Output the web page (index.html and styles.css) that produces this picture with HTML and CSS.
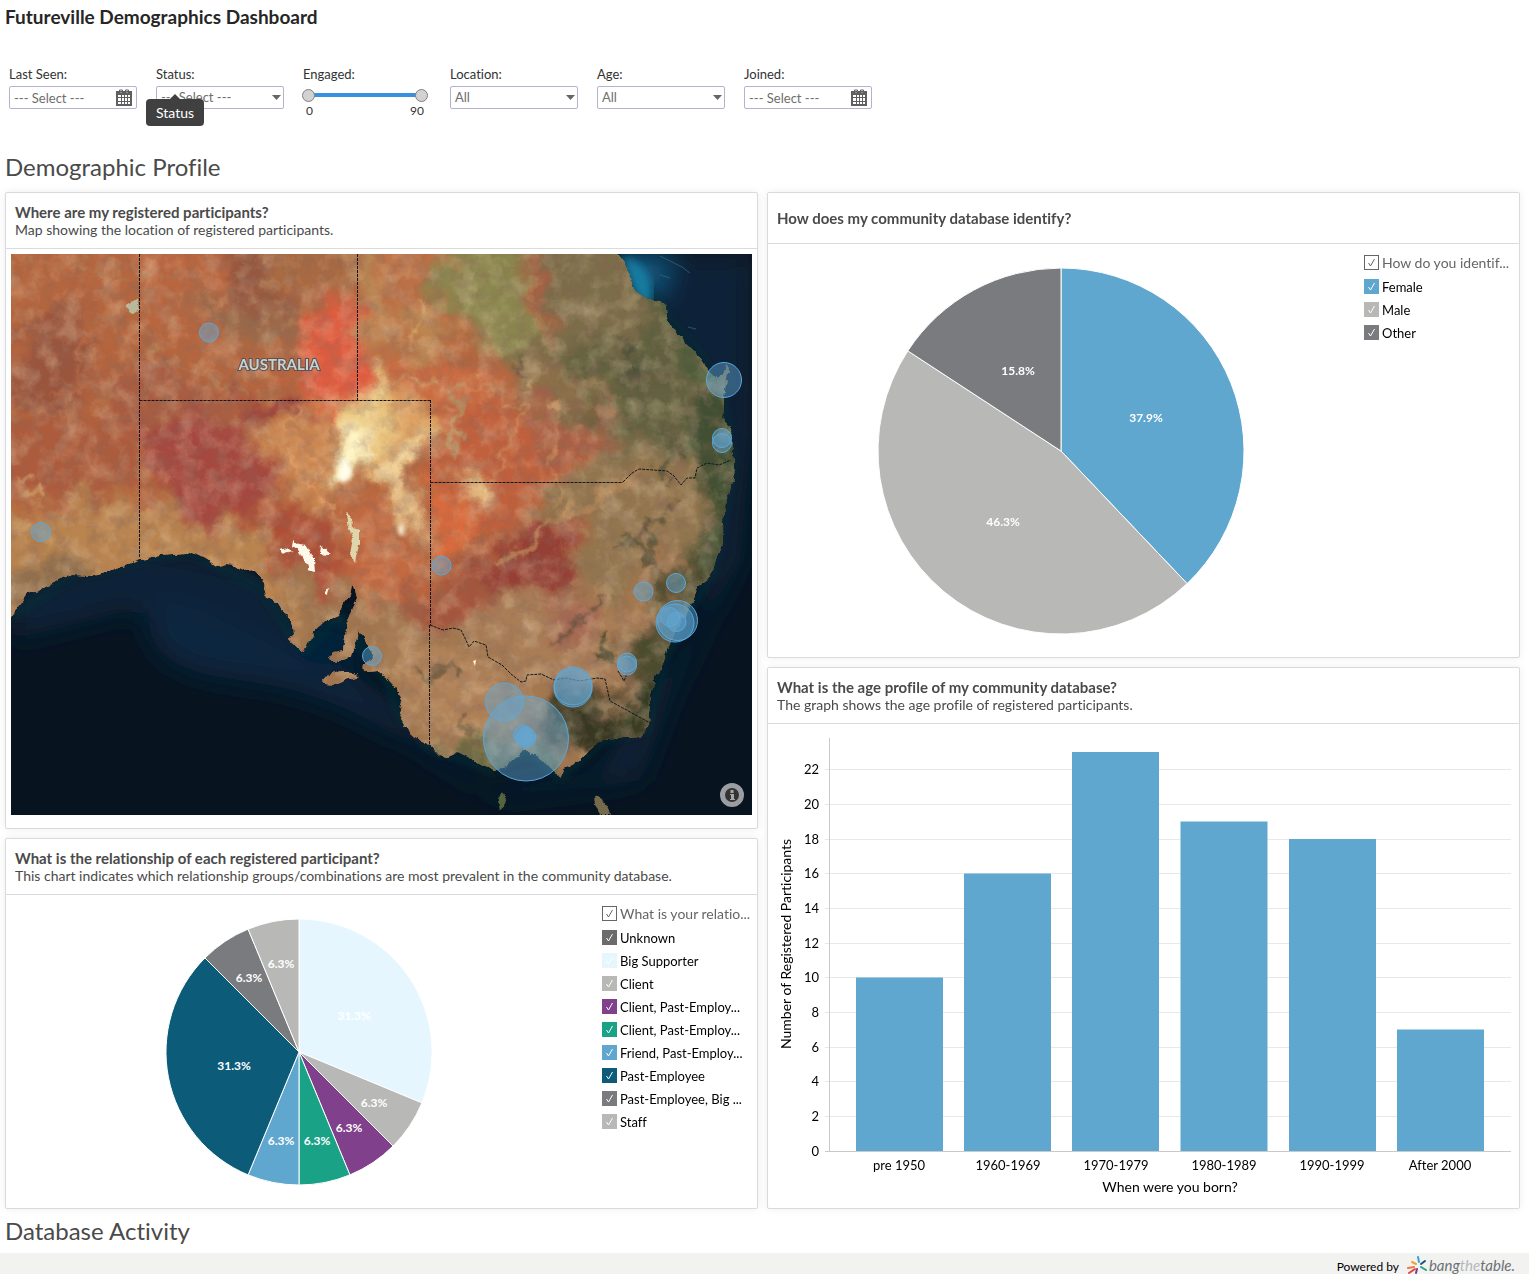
FILE: index.html
```html
<!DOCTYPE html>
<html lang="en">
<head>
<meta charset="utf-8">
<title>Futureville Demographics Dashboard</title>
<meta name="viewport" content="width=device-width, initial-scale=1">
<link rel="stylesheet" href="styles.css">
</head>
<body>
<main class="dashboard">
  <h1 class="dashboard-title">Futureville Demographics Dashboard</h1>

  <form class="filters">
    <div class="filter">
      <label for="last-seen">Last Seen:</label>
      <div class="field">
        <input id="last-seen" type="text" value="--- Select ---">
        <button type="button" class="calendar" aria-label="Pick last seen dates">
          <svg viewBox="0 0 16 17" width="16" height="17"><path fill="#5f5f5f" fill-rule="evenodd" d="M0 2h16v15H0zM2 6h3v2H2zM6 6h2v2H6zM9 6h2v2H9zM12 6h2v2h-2zM2 9h3v3H2zM6 9h2v3H6zM9 9h2v3H9zM12 9h2v3h-2zM2 13h3v2H2zM6 13h2v2H6zM9 13h2v2H9zM12 13h2v2h-2z"/><path d="M3.500 4V1h3v3M9.500 4V1h3v3" fill="none" stroke="#5f5f5f"/><path d="M4.500 3.500h1M10.500 3.500h1" stroke="#ccc"/></svg>
        </button>
      </div>
    </div>
    <div class="filter filter-status">
      <label for="status">Status:</label>
      <select id="status"><option>--- Select ---</option></select>
      <div class="tooltip" role="tooltip">Status</div>
    </div>
    <div class="filter">
      <label for="engaged-min">Engaged:</label>
      <div class="slider">
        <input id="engaged-min" type="range" min="0" max="90" value="0">
        <input id="engaged-max" type="range" min="0" max="90" value="90" aria-label="Engaged maximum">
      </div>
      <div class="slider-values"><span>0</span><span>90</span></div>
    </div>
    <div class="filter">
      <label for="location">Location:</label>
      <select id="location"><option>All</option></select>
    </div>
    <div class="filter">
      <label for="age">Age:</label>
      <select id="age"><option>All</option></select>
    </div>
    <div class="filter">
      <label for="joined">Joined:</label>
      <div class="field">
        <input id="joined" type="text" value="--- Select ---">
        <button type="button" class="calendar" aria-label="Pick joined dates">
          <svg viewBox="0 0 16 17" width="16" height="17"><path fill="#5f5f5f" fill-rule="evenodd" d="M0 2h16v15H0zM2 6h3v2H2zM6 6h2v2H6zM9 6h2v2H9zM12 6h2v2h-2zM2 9h3v3H2zM6 9h2v3H6zM9 9h2v3H9zM12 9h2v3h-2zM2 13h3v2H2zM6 13h2v2H6zM9 13h2v2H9zM12 13h2v2h-2z"/><path d="M3.500 4V1h3v3M9.500 4V1h3v3" fill="none" stroke="#5f5f5f"/><path d="M4.500 3.500h1M10.500 3.500h1" stroke="#ccc"/></svg>
        </button>
      </div>
    </div>
  </form>

  <h2 class="section-title">Demographic Profile</h2>

  <div class="cards">
    <div class="column">
      <section class="card">
        <header class="card-head">
          <h3>Where are my registered participants?</h3>
          <p>Map showing the location of registered participants.</p>
        </header>
        <div class="map">
          <svg viewBox="11 254 741 561" role="img" aria-label="Map of south-east Australia">
            <defs>
              <clipPath id="land"><path d="M-10 230H610L617 254 626 266 631 279 634 291 643 297 655 301 665 304 668 320 678 335 690 347 700 357 707 368 718 380 724 370 727 362 728 372 724 396 723 420 731 428 732 446 735 462 734 478 729 495 724 512 722 530 723 542 717 556 712 573 703 583 697 588 692 604 683 618 675 632 668 646 663 661 656 677 651 694 649 712 648 728 640 737 625 738 603 740 592 748 578 761 562 769 560 779 556 773 547 764 535 755 526 749 518 756 505 767 493 770 480 764 468 757 458 752 447 757 439 755 431 746 420 741 409 731 399 713 402 703 397 690 388 679 378 671 366 672 361 668 368 662 374 655 369 647 363 638 359 629 356 642 352 655 345 659 335 662 329 659 333 652 343 650 345 636 347 622 352 608 357 598 355 590 352 583 350 596 343 604 338 616 326 621 315 631 308 642 303 652 296 647 289 640 293 634 291 620 284 614 278 604 267 598 264 588 265 580 255 571 245 572 236 566 226 565 218 567 205 558 191 551 186 554 160 556 139 559 125 566 107 573 93 576 72 575 60 579 40 590 27 594 21 603 11 617L-10 630z"/><path d="M322 681L328 674 342 671 350 672 360 676 352 679 344 681 337 685 325 684z"/></clipPath>
              <filter id="warp" x="-5%" y="-5%" width="110%" height="110%"><feTurbulence type="fractalNoise" baseFrequency=".022" numOctaves="6" seed="8" result="n"/><feGaussianBlur in="SourceGraphic" stdDeviation="7" result="b"/><feDisplacementMap in="b" in2="n" scale="60" xChannelSelector="R" yChannelSelector="G"/></filter>
              <filter id="detail" x="-5%" y="-5%" width="110%" height="110%"><feTurbulence type="fractalNoise" baseFrequency=".05" numOctaves="5" seed="21" result="n"/><feDisplacementMap in="SourceGraphic" in2="n" scale="34" xChannelSelector="R" yChannelSelector="G" result="d"/><feGaussianBlur in="d" stdDeviation="1"/></filter>
              <filter id="rough" x="-5%" y="-5%" width="110%" height="110%"><feTurbulence type="fractalNoise" baseFrequency=".12" numOctaves="3" seed="4" result="n"/><feDisplacementMap in="SourceGraphic" in2="n" scale="6" xChannelSelector="R" yChannelSelector="G"/></filter>
              <filter id="lightgrain" x="0" y="0" width="100%" height="100%"><feTurbulence type="fractalNoise" baseFrequency=".05" numOctaves="7" seed="13"/><feColorMatrix values="0 0 0 0 .88  0 0 0 0 .7  0 0 0 0 .46  1.800 0 0 0 -.75"/></filter>
              <filter id="darkgrain" x="0" y="0" width="100%" height="100%"><feTurbulence type="fractalNoise" baseFrequency=".07" numOctaves="7" seed="31"/><feColorMatrix values="0 0 0 0 .24  0 0 0 0 .13  0 0 0 0 .1  0 2 0 0 -.85"/></filter>
              <filter id="soft" x="-30%" y="-30%" width="160%" height="160%"><feGaussianBlur stdDeviation="14"/></filter>
              <filter id="shore" x="-5%" y="-5%" width="110%" height="110%"><feGaussianBlur stdDeviation="4"/></filter>
              <filter id="glow" x="-50%" y="-50%" width="200%" height="200%"><feGaussianBlur stdDeviation="2"/></filter>
            </defs>
            <rect x="11" y="254" width="741" height="561" fill="#07141f"/>
            <g filter="url(#soft)">
              <path d="M11 590L140 545 260 570 320 650 420 720 500 800 640 780 670 700 740 560 752 430V254H600L720 400 700 620 600 770 480 790 410 740 350 700 250 640 130 610 11 640z" fill="#0b2038"/>
              <path d="M60 612Q160 590 210 615T320 670 400 740Q330 690 240 680T150 625 40 630z" fill="#102740"/>
              <path d="M610 254L670 254 655 300z" fill="#13618c"/>
              <ellipse cx="330" cy="640" rx="40" ry="25" fill="#06243a"/>
            </g>
            <path d="M617 254L634 290 655 301 668 320 700 357 722 400 733 460 724 512 712 573 683 618 663 661 648 728 600 740 560 777 526 749 493 770 431 746 399 713 388 679 357 640 338 616 303 652 264 590 191 551 139 559 72 575 11 617" fill="none" stroke="#0d3038" stroke-width="5" filter="url(#shore)"/>
            <path d="M622 256Q650 262 652 290T634 292z" fill="#147ba0" filter="url(#shore)"/>
            <path d="M660 256l10 5 12 6 8 6M660 275l10 3M688 327l8 2" fill="none" stroke="#356b7d" opacity=".7"/>
            <g filter="url(#rough)">
            <path d="M498 800l4-8 4 5-1 10-5 4z" fill="#54653f"/>
            <path d="M594 795l8 4 6 9 2 7h-9l-6-9z" fill="#746b4c"/>
            <g clip-path="url(#land)">
              <rect x="-20" y="220" width="800" height="620" fill="#b4663f"/>
              <g filter="url(#warp)">
                <path d="M500 220H800V580L620 560 560 420 500 350z" fill="#7b6d48"/>
                <path d="M270 580L420 590 600 560 780 540V840H270z" fill="#a2774f"/>
                <path d="M-20 510L80 500 240 512 275 550 290 620-20 660z" fill="#b98450"/>
                <path d="M20 320L80 305 85 400 50 420 15 390z" fill="#9a543e"/>
                <path d="M90 370L150 360 260 420 230 450 120 440z" fill="#a75d42"/>
                <path d="M140 220L230 220 260 320 150 330z" fill="#b9663f"/>
                <path d="M225 220L280 220 290 310 240 330z" fill="#96593f"/>
                <path d="M170 295L240 300 300 320 285 345 220 345z" fill="#9b694a"/>
                <path d="M260 220L350 220 350 280 300 310 270 280z" fill="#a86a42"/>
                <path d="M345 220L420 220 415 300 385 370 365 330z" fill="#bb8a56"/>
                <path d="M300 330L325 305 365 315 378 390 355 430 310 415 285 370z" fill="#de5b40"/>
                <path d="M150 415L240 420 272 460 265 500 210 525 150 495z" fill="#a54a41"/>
                <path d="M-10 420H135V480L100 500-10 490z" fill="#ac5b3c"/>
                <path d="M240 400L300 410 290 428 250 420z" fill="#9a413e"/>
                <path d="M270 435L330 400 345 460 330 510 290 500 268 460z" fill="#cb8651"/>
                <path d="M-20 580L60 555 100 570 40 605-20 630z" fill="#92704d"/>
                <path d="M240 500L330 515 350 560 330 600 290 580z" fill="#ad4f39"/>
                <path d="M345 405L385 375 405 410 385 450 360 480 340 500 328 465z" fill="#edcd86"/>
                <path d="M342 430L362 420 368 450 350 490 333 480z" fill="#fff7c8"/>
                <path d="M385 400L430 395 425 440 410 470 416 540 390 500 375 470z" fill="#dca060"/>
                <path d="M405 425L422 430 410 470 414 535 402 530 396 490 380 475z" fill="#f2d59a"/>
                <path d="M350 500L395 510 420 600 350 590z" fill="#c46b43"/>
                <path d="M370 220L440 220 440 330 385 350z" fill="#bb7044"/>
                <path d="M395 300L450 300 450 350 405 370z" fill="#bd8450"/>
                <path d="M430 220L520 220 540 330 500 355 455 310z" fill="#8b8650"/>
                <path d="M530 220L545 270 550 340 543 340 534 300z" fill="#b45840"/>
                <path d="M550 355L660 330 710 380 720 470 680 460 590 410z" fill="#646240"/>
                <path d="M600 370L650 360 660 385 610 400z" fill="#50533a"/>
                <path d="M500 350L570 360 590 400 520 405z" fill="#8c704a"/>
                <path d="M395 365L500 375 500 420 430 440 430 400 390 400z" fill="#c96c42"/>
                <path d="M435 410L540 400 600 440 590 480 520 520 440 560z" fill="#c0603e"/>
                <path d="M510 400L600 415 610 445 540 480z" fill="#ab6044"/>
                <path d="M465 470L490 470 482 505 465 490z" fill="#f0cb88"/>
                <path d="M430 490L470 500 480 545 430 570z" fill="#d86a3e"/>
                <path d="M520 510L610 455 700 460 690 540 600 600 575 520z" fill="#937650"/>
                <path d="M495 545L560 515 590 570 560 605 500 595 470 570z" fill="#953f34"/>
                <path d="M400 590L480 570 495 615 420 620z" fill="#a6563e"/>
                <path d="M480 610L560 590 640 620 640 670 560 690 480 650z" fill="#a97d56"/>
                <path d="M535 605L580 600 600 640 560 640z" fill="#a66651"/>
                <path d="M420 635L520 690 500 740 460 750 400 700 380 630z" fill="#b08259"/>
                <path d="M700 390L780 380 780 480 750 580 690 610 700 500z" fill="#435031"/>
                <path d="M650 600L690 570 740 590 690 680 670 750 600 760 620 680z" fill="#4b4b2f"/>
                <path d="M545 700L610 685 650 735 590 760 535 725z" fill="#383921"/>
                <path d="M612 655L642 655 638 710 612 710z" fill="#806544"/>
                <path d="M440 745L560 745 570 800 430 790z" fill="#686740"/>
                <path d="M610 230L650 260 735 380 690 380 650 320z" fill="#4f5d3a"/>
              </g>
              <g filter="url(#detail)" fill="none" stroke-linecap="round" opacity=".75">
                <path d="M500 565L530 540 560 520 590 505 640 470" stroke="#b98d5c" stroke-width="8"/>
                <path d="M450 400L480 380 520 410 510 450 480 490M560 400L550 450 560 500" stroke="#cf9762" stroke-width="3"/>
                <path d="M460 390Q450 420 458 450" stroke="#b19a69" stroke-width="7"/>
                <path d="M410 350Q430 320 420 300M400 380L440 385M520 390L530 380" stroke="#d8ad6d" stroke-width="3"/>
                <path d="M140 350L200 372 250 395M80 260L120 280 180 270" stroke="#a98760" stroke-width="2"/>
                <path d="M20 480L30 470M25 500L40 495" stroke="#d1a06b" stroke-width="4"/>
                <path d="M85 330Q80 380 60 400" stroke="#c47046" stroke-width="3"/>
                <path d="M290 410L300 440 320 470 310 490M280 450L300 480 340 520" stroke="#e5a167" stroke-width="3"/>
                <path d="M625 340L635 355 620 375" stroke="#4b4c39" stroke-width="5"/>
                <path d="M670 430L672 460 665 480M655 520L650 560 625 535" stroke="#55513a" stroke-width="7"/>
                <path d="M420 675L460 670M460 715L465 735" stroke="#67563d" stroke-width="7"/>
                <path d="M525 380L519 360M610 590L560 640M680 500L640 540" stroke="#5d493c" stroke-width="3"/>
                <path d="M610 670L600 650 610 630M620 730L650 690" stroke="#2f3820" stroke-width="7"/>
              </g>
              <rect x="-10" y="240" width="780" height="590" filter="url(#lightgrain)" opacity=".4"/>
              <rect x="-10" y="240" width="780" height="590" filter="url(#darkgrain)" opacity=".4"/>
              <path d="M346 512l5 5 1 10 7 2 0 16-4 17-5-8 3-16-6-14z" fill="#ded5aa"/>
              <path d="M125 307l13-8 2 10-8 4z" fill="#b7bb9b"/>
            </g>
            <path d="M294 541l5 4 8 1 4 8 3 5 1 14-9-2 4-6-7-4-4-10-6-5zM322 545l5 7 4 1-6 4-4-3zM278 550l10-2 4 4-9 3zM325 593l5-6-2 8z" fill="#fff9ea"/>
            </g>
            <path d="M344 455l6 10 3 10-10 8-6-6zM398 526l5-2 1 11-5 0z" fill="#fffde8" filter="url(#glow)"/>
            <path d="M473 661l3-1-1 6zM498 308l-3-3M545 300l4-4" fill="#fff6dc"/>
            <path d="M139.500 254V558M139.500 400.500H430.500M357.500 254V400M430.500 400V625M430.500 482.500H623M429.500 625V745" class="border"/>
            <path d="M623 482l9-9 7-4 14 1 14 1 7 5 7 9 6-7 8 0 2-10 10-5 12 2 12-5M430 625l13 5 10-2 8 2 4 8 4 9 5-6 12 4 2 12 14 8 9 9 10 8 5-1 1-6 14-1 13 6 11-2 15 3 17-3 8 1 5 22 42 23M618 671l6 10 3-7M487 781H527M557 781H601" class="border"/>
            <text x="279" y="370" class="country">AUSTRALIA</text>
            <g class="bubbles">
              <circle cx="209" cy="332.500" r="9.500"/><circle cx="41" cy="532" r="9.500"/><circle cx="724" cy="380" r="17.500"/><circle cx="722" cy="438" r="9.500"/><circle cx="722" cy="443" r="9.500"/><circle cx="441.500" cy="565.500" r="9.500"/><circle cx="643.500" cy="591.500" r="9.500"/><circle cx="676" cy="583" r="9.500"/><circle cx="677.500" cy="620.500" r="20"/><circle cx="675" cy="623" r="19"/><circle cx="670" cy="617" r="9.500"/><circle cx="676.500" cy="622" r="9.500"/><circle cx="627" cy="662.500" r="9.500"/><circle cx="627" cy="665.500" r="9.500"/><circle cx="372" cy="656" r="9.500"/><circle cx="573" cy="686" r="19"/><circle cx="573" cy="688" r="19"/><circle cx="504.500" cy="702" r="19"/><circle cx="526" cy="738.500" r="42.500"/><circle cx="523" cy="735" r="9.500"/><circle cx="526" cy="737.500" r="10"/><circle cx="526" cy="737.500" r="8"/>
            </g>
            <circle cx="732" cy="795" r="9.500" fill="#333" stroke="#9a9da1" stroke-width="5"/>
            <path d="M730.500 790h3v3h-3zM730 794h4v5h1v1h-5v-1h1v-4h-1z" fill="#a5a7aa"/>
          </svg>
        </div>
      </section>

      <section class="card card-fill">
        <header class="card-head">
          <h3>What is the relationship of each registered participant?</h3>
          <p>This chart indicates which relationship groups/combinations are most prevalent in the community database.</p>
        </header>
        <div class="pie-layout">
          <svg class="pie pie-small" viewBox="-133 -133 266 266" role="img" aria-label="Relationship pie chart">
            <path fill="#e6f6fe" d="M0 0V-133A133 133 0 0 1 122.880 50.900z"/>
            <path fill="#b8b8b6" d="M0 0L122.880 50.900A133 133 0 0 1 94.050 94.050z"/>
            <path fill="#81408b" d="M0 0L94.050 94.050A133 133 0 0 1 50.900 122.880z"/>
            <path fill="#1aa287" d="M0 0L50.900 122.880A133 133 0 0 1 0 133z"/>
            <path fill="#60a7cf" d="M0 0V133A133 133 0 0 1-50.900 122.880z"/>
            <path fill="#0b5b79" d="M0 0L-50.900 122.880A133 133 0 0 1-94.050-94.050z"/>
            <path fill="#7a7b7f" d="M0 0L-94.050-94.050A133 133 0 0 1-50.900-122.880z"/>
            <path fill="#b8b8b6" d="M0 0L-50.900-122.880A133 133 0 0 1 0-133z"/>
            <text x="55" y="-32">31.3%</text><text x="75" y="55">6.3%</text><text x="50" y="80">6.3%</text><text x="18" y="93">6.3%</text><text x="-18" y="93">6.3%</text><text x="-65" y="18">31.3%</text><text x="-50" y="-70">6.3%</text><text x="-18" y="-84">6.3%</text>
          </svg>
          <div class="legend">
            <label class="legend-title"><input type="checkbox" class="box box-outline" checked>What is your relatio...</label>
            <label><input type="checkbox" class="box box-unknown" checked>Unknown</label>
            <label><input type="checkbox" class="box box-pale" checked>Big Supporter</label>
            <label><input type="checkbox" class="box box-silver" checked>Client</label>
            <label><input type="checkbox" class="box box-purple" checked>Client, Past-Employ...</label>
            <label><input type="checkbox" class="box box-green" checked>Client, Past-Employ...</label>
            <label><input type="checkbox" class="box box-blue" checked>Friend, Past-Employ...</label>
            <label><input type="checkbox" class="box box-navy" checked>Past-Employee</label>
            <label><input type="checkbox" class="box box-grey" checked>Past-Employee, Big ...</label>
            <label><input type="checkbox" class="box box-silver" checked>Staff</label>
          </div>
        </div>
      </section>
    </div>

    <div class="column">
      <section class="card">
        <header class="card-head card-head-single">
          <h3>How does my community database identify?</h3>
        </header>
        <div class="pie-layout">
          <svg class="pie pie-large" viewBox="-183 -183 366 366" role="img" aria-label="Gender pie chart">
            <path fill="#60a7cf" d="M0 0V-183A183 183 0 0 1 126.100 132.620z"/>
            <path fill="#b8b8b6" d="M0 0L126.100 132.620A183 183 0 0 1-153.200-100.100z"/>
            <path fill="#7a7b7f" d="M0 0L-153.200-100.100A183 183 0 0 1 0-183z"/>
            <text x="85" y="-29">37.9%</text><text x="-58" y="75">46.3%</text><text x="-43" y="-76">15.8%</text>
          </svg>
          <div class="legend">
            <label class="legend-title"><input type="checkbox" class="box box-outline" checked>How do you identif...</label>
            <label><input type="checkbox" class="box box-blue" checked>Female</label>
            <label><input type="checkbox" class="box box-silver" checked>Male</label>
            <label><input type="checkbox" class="box box-grey" checked>Other</label>
          </div>
        </div>
      </section>

      <section class="card card-fill">
        <header class="card-head">
          <h3>What is the age profile of my community database?</h3>
          <p>The graph shows the age profile of registered participants.</p>
        </header>
        <svg class="bars" viewBox="768 724 751 484" role="img" aria-label="Registered participants by year of birth">
          <path class="gridline" d="M825 1116.500H1511M825 1081.500H1511M825 1047.500H1511M825 1012.500H1511M825 977.500H1511M825 943.500H1511M825 908.500H1511M825 873.500H1511M825 839.500H1511M825 804.500H1511M825 769.500H1511"/>
          <g fill="#60a7cf"><path d="M856 977.500h87v173.500h-87zM964 873.500h87V1151h-87zM1072 752h87v399h-87zM1180.500 821.500h87V1151h-87zM1289 839h87v312h-87zM1397 1029.500h87v121.500h-87z"/></g>
          <path class="axis" d="M829.500 738V1151.500M825 1151.500H1511"/>
          <g class="tick-y"><text x="819" y="1156">0</text><text x="819" y="1121">2</text><text x="819" y="1086">4</text><text x="819" y="1052">6</text><text x="819" y="1017">8</text><text x="819" y="982">10</text><text x="819" y="948">12</text><text x="819" y="913">14</text><text x="819" y="878">16</text><text x="819" y="844">18</text><text x="819" y="809">20</text><text x="819" y="774">22</text></g>
          <g class="tick-x"><text x="899" y="1170">pre 1950</text><text x="1008" y="1170">1960-1969</text><text x="1116" y="1170">1970-1979</text><text x="1224" y="1170">1980-1989</text><text x="1332" y="1170">1990-1999</text><text x="1440" y="1170">After 2000</text></g>
          <g class="axis-title"><text x="1170" y="1192">When were you born?</text><text transform="translate(791 944) rotate(-90)">Number of Registered Participants</text></g>
        </svg>
      </section>
    </div>
  </div>

  <h2 class="section-title section-title-last">Database Activity</h2>
</main>
<footer class="footer">
  <span>Powered by</span>
  <a href="#" class="brand" aria-label="bangthetable">
    <svg viewBox="0 0 20 19" width="20" height="19"><g fill="none" stroke-width="2" stroke-linecap="round"><path d="M11 1L12 6" stroke="#38a3d8"/><path d="M5 6l4 2" stroke="#f2a23a"/><path d="M14 8l4-3" stroke="#17537c"/><path d="M1 12l6-1" stroke="#ee7a40"/><path d="M2 17l6-4" stroke="#e2454b"/><path d="M9 17l1-4" stroke="#77408c"/><path d="M14 11l5 3" stroke="#21a38c"/></g></svg>
    <span class="brand-name">bang<span class="brand-light">the</span>table.</span>
  </a>
</footer>
</body>
</html>
```
FILE: styles.css
```css
* { box-sizing: border-box; }

body {
  margin: 0;
  background: #fff;
  color: #4a4a4a;
  font: 14px/18px Lato, "Open Sans", sans-serif;
  font-variant-ligatures: none;
}

h1, h2, h3, p { margin: 0; }

.dashboard { padding: 5px 9px 0 5px; }

.dashboard-title {
  color: #262626;
  font-size: 19px;
  line-height: 24px;
}

/* Filters */
.filters {
  display: flex;
  gap: 19px;
  margin-top: 36px;
  padding-left: 4px;
}

.filter {
  width: 128px;
  color: #333;
  font-size: 13px;
}

.filter label {
  display: block;
  height: 21px;
  line-height: 18px;
}

.filter-status { position: relative; }

.field,
.filter select {
  width: 100%;
  height: 23px;
  border: 1px solid #b3b3cf;
  border-radius: 2px;
  background-color: #fff;
}

.field {
  display: flex;
  align-items: center;
  padding: 0 4px;
}

.field input {
  flex: 1;
  min-width: 0;
  padding: 0;
  border: 0;
  outline: 0;
  background: none;
  color: #6e6e6e;
  font: inherit;
}

.calendar {
  display: flex;
  padding: 0;
  border: 0;
  background: none;
}

.filter select {
  display: block;
  appearance: none;
  padding: 0 16px 2px 4px;
  background-image: url("data:image/svg+xml,%3Csvg xmlns='http://www.w3.org/2000/svg' width='10' height='5'%3E%3Cpath d='M0 0h9L4.500 5z' fill='%23666'/%3E%3C/svg%3E");
  background-repeat: no-repeat;
  background-position: right 1px center;
  color: #6e6e6e;
  font: inherit;
}

.tooltip {
  position: absolute;
  top: 34px;
  left: -10px;
  width: 58px;
  border-radius: 4px;
  background: #404040;
  color: #fff;
  font-size: 14px;
  line-height: 27px;
  text-align: center;
}

.tooltip::before {
  content: "";
  position: absolute;
  top: -5px;
  left: 24px;
  border: 5px solid transparent;
  border-top: 0;
  border-bottom-color: #404040;
}

.slider {
  display: grid;
  width: 126px;
  height: 18px;
  margin-left: -1px;
  background: linear-gradient(#3990de, #3990de) center / 112px 4px no-repeat;
}

.slider input {
  grid-area: 1 / 1;
  width: 100%;
  height: 18px;
  margin: 0;
  appearance: none;
  background: none;
  pointer-events: none;
}

.slider input::-webkit-slider-thumb {
  width: 13px;
  height: 13px;
  appearance: none;
  border: 1px solid #808080;
  border-radius: 50%;
  background: #d2d2d2;
  pointer-events: auto;
}

.slider-values {
  display: flex;
  justify-content: space-between;
  padding: 0 7px 0 3px;
  font-size: 12px;
  line-height: 13px;
}

/* Sections and cards */
.section-title {
  margin-top: 32px;
  padding: 4px 0 11px;
  font-size: 24px;
  font-weight: 400;
  line-height: 28px;
}

.section-title-last {
  margin-top: 0;
  padding: 8px 0;
}

.cards {
  display: grid;
  grid-template-columns: 1fr 1fr;
  gap: 9px;
}

.column {
  display: flex;
  flex-direction: column;
  gap: 9px;
  min-width: 0;
}

.card {
  border: 1px solid #dadada;
  border-radius: 2px;
  background: #fff;
  box-shadow: 0 0 8px #00000012;
}

.card-fill { flex: 1; }

.card-head {
  min-height: 56px;
  padding: 10px 9px 9px;
  border-bottom: 1px solid #dadbe0;
}

.card-head h3 {
  font-size: 15px;
  line-height: 18px;
}

.card-head-single {
  min-height: 51px;
  padding: 16px 9px;
}

.map { padding: 5px 5px 13px; }

.map svg {
  display: block;
  width: 100%;
}

.border {
  fill: none;
  stroke: #12181e;
  stroke-width: 1;
  stroke-dasharray: 3 1;
}

.country {
  fill: #cfcfcf;
  stroke: #555;
  stroke-width: 2px;
  paint-order: stroke;
  font-size: 15px;
  font-weight: 700;
  text-anchor: middle;
}

.bubbles {
  fill: #62a9d6;
  fill-opacity: .45;
  stroke: #5ba8dc;
}

/* Pie charts */
.pie-layout {
  display: grid;
  grid-template-columns: 1fr 166px;
}

.pie {
  display: block;
  justify-self: center;
  overflow: visible;
  margin: 24px 0 23px;
}

.pie-small { width: 266px; }
.pie-large { width: 366px; }

.pie path {
  stroke: #fff;
  stroke-width: 1;
}

.pie text {
  fill: #fff;
  font-size: 12px;
  font-weight: 700;
  text-anchor: middle;
}

.legend {
  padding: 6px 0 0 11px;
  color: #000;
  font-size: 13px;
}

.legend label {
  display: flex;
  align-items: center;
  gap: 3px;
  height: 23px;
  white-space: nowrap;
}

.legend .legend-title {
  height: 25px;
  color: #666;
  font-size: 14px;
}

.box {
  flex: none;
  width: 15px;
  height: 15px;
  margin: 0;
  appearance: none;
  background: url("data:image/svg+xml,%3Csvg xmlns='http://www.w3.org/2000/svg' width='15' height='15'%3E%3Cpath d='M4.500 8l2 3 4-7' fill='none' stroke='white'/%3E%3C/svg%3E") center no-repeat;
}

.box-outline {
  border: 1px solid #666;
  background-image: url("data:image/svg+xml,%3Csvg xmlns='http://www.w3.org/2000/svg' width='15' height='15'%3E%3Cpath d='M4.500 8l2 3 4-7' fill='none' stroke='%23666'/%3E%3C/svg%3E");
}

.box-unknown { background-color: #6b6b6b; }
.box-pale { background-color: #e6f6fe; }
.box-silver { background-color: #b8b8b6; }
.box-purple { background-color: #81408b; }
.box-green { background-color: #1aa287; }
.box-blue { background-color: #60a7cf; }
.box-navy { background-color: #0b5b79; }
.box-grey { background-color: #7a7b7f; }

/* Bar chart */
.bars {
  display: block;
  width: 100%;
  fill: #000;
  font-size: 13px;
}

.gridline { stroke: #e8e8e8; }
.axis { fill: none; stroke: #c9c9c9; }
.tick-y { text-anchor: end; }
.tick-x { text-anchor: middle; }
.axis-title { font-size: 14px; text-anchor: middle; }

/* Footer */
.footer {
  display: flex;
  justify-content: flex-end;
  height: 21px;
  padding: 3px 14px 0 0;
  overflow: hidden;
  background: #f2f2f0;
  color: #000;
  font-size: 12px;
  line-height: 21px;
}

.brand {
  display: flex;
  gap: 2px;
  margin-left: 8px;
  color: #6b7075;
  text-decoration: none;
}

.brand-name {
  font-size: 15px;
  font-style: italic;
  line-height: 18px;
}

.brand-light { color: #b5b8ba; }
```
